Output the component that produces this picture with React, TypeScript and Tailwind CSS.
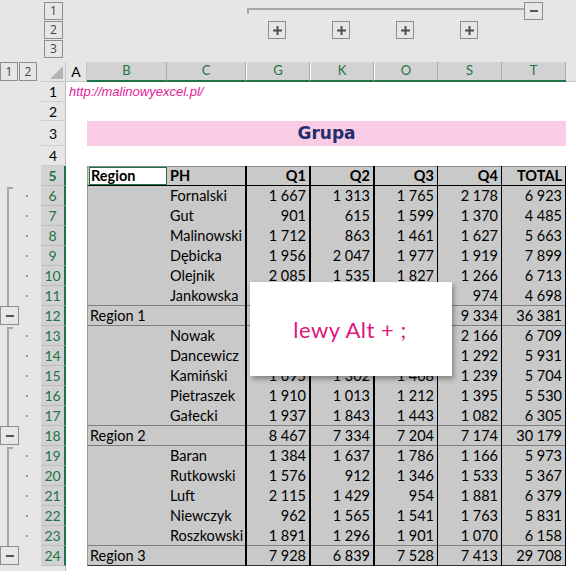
import React from 'react';

type DataRow = {
  n: number;
  kind: 'detail' | 'region';
  first?: boolean;
  last?: boolean;
  b: string;
  c: string;
  v: number[];
};

const rows: DataRow[] = [
  { n: 6, kind: 'detail', first: true, b: '', c: 'Fornalski', v: [1667, 1313, 1765, 2178, 6923] },
  { n: 7, kind: 'detail', b: '', c: 'Gut', v: [901, 615, 1599, 1370, 4485] },
  { n: 8, kind: 'detail', b: '', c: 'Malinowski', v: [1712, 863, 1461, 1627, 5663] },
  { n: 9, kind: 'detail', b: '', c: 'Dębicka', v: [1956, 2047, 1977, 1919, 7899] },
  { n: 10, kind: 'detail', b: '', c: 'Olejnik', v: [2085, 1535, 1827, 1266, 6713] },
  { n: 11, kind: 'detail', last: true, b: '', c: 'Jankowska', v: [1201, 1188, 1335, 974, 4698] },
  { n: 12, kind: 'region', b: 'Region 1', c: '', v: [9522, 7561, 9964, 9334, 36381] },
  { n: 13, kind: 'detail', first: true, b: '', c: 'Nowak', v: [1318, 1562, 1663, 2166, 6709] },
  { n: 14, kind: 'detail', b: '', c: 'Dancewicz', v: [1607, 1614, 1418, 1292, 5931] },
  { n: 15, kind: 'detail', b: '', c: 'Kamiński', v: [1695, 1302, 1468, 1239, 5704] },
  { n: 16, kind: 'detail', b: '', c: 'Pietraszek', v: [1910, 1013, 1212, 1395, 5530] },
  { n: 17, kind: 'detail', last: true, b: '', c: 'Gałecki', v: [1937, 1843, 1443, 1082, 6305] },
  { n: 18, kind: 'region', b: 'Region 2', c: '', v: [8467, 7334, 7204, 7174, 30179] },
  { n: 19, kind: 'detail', first: true, b: '', c: 'Baran', v: [1384, 1637, 1786, 1166, 5973] },
  { n: 20, kind: 'detail', b: '', c: 'Rutkowski', v: [1576, 912, 1346, 1533, 5367] },
  { n: 21, kind: 'detail', b: '', c: 'Luft', v: [2115, 1429, 954, 1881, 6379] },
  { n: 22, kind: 'detail', b: '', c: 'Niewczyk', v: [962, 1565, 1541, 1763, 5831] },
  { n: 23, kind: 'detail', last: true, b: '', c: 'Roszkowski', v: [1891, 1296, 1901, 1070, 6158] },
  { n: 24, kind: 'region', b: 'Region 3', c: '', v: [7928, 6839, 7528, 7413, 29708] },
];

const fmt = (n: number) =>
  n >= 1000 ? `${Math.floor(n / 1000)}\u00a0${String(n % 1000).padStart(3, '0')}` : String(n);

// widths of the value columns G K O S T and the black rules after each one
const valueCols = [
  { w: 'w-[62px]', sep: 'w-[2px]' },
  { w: 'w-[62px]', sep: 'w-[2px]' },
  { w: 'w-[62px]', sep: 'w-[1px]' },
  { w: 'w-[63px]', sep: 'w-[1px]' },
  { w: 'w-[63px]', sep: 'w-[1px]' },
];

const PlusIcon = () => (
  <svg width="9" height="9" viewBox="0 0 9 9">
    <rect x="0" y="3.5" width="9" height="2" fill="#505050" />
    <rect x="3.5" y="0" width="2" height="9" fill="#505050" />
  </svg>
);

const MinusIcon = () => <div className="h-[2px] w-[8px] bg-[#555]" />;

const OutlineBox: React.FC<{ className?: string; children?: React.ReactNode }> = ({ className = '', children }) => (
  <div
    className={`flex items-center justify-center border border-[#8e8e8e] bg-[#e6e6e6] text-[12px] leading-none text-[#444] font-['Open_Sans',sans-serif] ${className}`}
  >
    {children}
  </div>
);

const Strip: React.FC<{ row?: DataRow }> = ({ row }) => {
  if (!row) return <div className="w-[41px] shrink-0 bg-[#e6e6e6]" />;
  if (row.kind === 'region') {
    return (
      <div className="flex w-[41px] shrink-0 bg-[#e6e6e6]">
        <OutlineBox className="h-[19px] w-[19px]">
          <MinusIcon />
        </OutlineBox>
      </div>
    );
  }
  return (
    <div className="flex w-[41px] shrink-0 bg-[#e6e6e6]">
      <div className={`h-full w-[19px] pl-[7px] ${row.first ? 'pt-[1px]' : ''}`}>
        <div className={`h-full w-[6px] border-l-2 border-[#a6a6a6] ${row.first ? 'border-t-2' : ''}`} />
      </div>
      <div className="flex items-center pl-[7px]">
        <div className="h-[2px] w-[2px] bg-[#9a9a9a]" />
      </div>
    </div>
  );
};

const RowHead: React.FC<{ n: number; active?: boolean }> = ({ n, active }) => (
  <div
    className={`flex w-[25px] shrink-0 items-center justify-center border-b text-[14px] ${
      active
        ? 'border-r-2 border-b-[#bdbdbd] border-r-[#217346] bg-[#d2d2d2] text-[#217346]'
        : 'border-r border-b-[#cfcfcf] border-r-[#bdbdbd] bg-[#e6e6e6] text-black'
    }`}
  >
    {n}
  </div>
);

const SheetRow: React.FC<{ row: DataRow }> = ({ row }) => {
  const line =
    row.kind === 'region' && row.n === 24
      ? 'border-b border-[#333]'
      : row.kind === 'region' || row.last
        ? 'border-b border-[#7f7f7f]'
        : '';
  return (
    <div className="flex h-[20px] text-[14.5px] text-black">
      <Strip row={row} />
      <RowHead n={row.n} active />
      <div className="w-[21px] shrink-0 bg-white" />
      <div className={`flex w-[80px] shrink-0 items-center border-l border-l-[#9a9a9a] bg-[#c9c9c9] pl-[2px] whitespace-nowrap ${line}`}>
        {row.b}
      </div>
      <div className={`flex w-[78px] shrink-0 items-center bg-[#c9c9c9] pl-[3px] whitespace-nowrap ${line}`}>{row.c}</div>
      <div className="w-[2px] shrink-0 bg-black" />
      {valueCols.map((col, i) => (
        <React.Fragment key={i}>
          <div className={`flex ${col.w} shrink-0 items-center justify-end bg-[#c9c9c9] pr-[3px] ${line}`}>
            {fmt(row.v[i])}
          </div>
          <div className={`${col.sep} shrink-0 bg-black`} />
        </React.Fragment>
      ))}
      <div className="flex-1 bg-white" />
    </div>
  );
};

export default function App() {
  return (
    <div className="relative h-[571px] w-[576px] overflow-hidden bg-white font-['Lato',sans-serif]">
      {/* outline levels for columns */}
      <div className="flex h-[62px] bg-[#e6e6e6]">
        <div className="w-[44px] shrink-0" />
        <div className="flex flex-col gap-[1px] pt-[2px]">
          {['1', '2', '3'].map((l) => (
            <OutlineBox key={l} className="h-[18px] w-[19px]">
              {l}
            </OutlineBox>
          ))}
        </div>
        <div className="w-[184px] shrink-0" />
        <div className="flex flex-col">
          <div className="flex h-[21px] items-start">
            <div className="mt-[8px] h-[6px] w-[277px] border-l-2 border-t-2 border-[#a6a6a6]" />
            <OutlineBox className="mt-[2px] h-[18px] w-[19px]">
              <MinusIcon />
            </OutlineBox>
          </div>
          <div className="flex gap-[46px] pl-[21px]">
            {[0, 1, 2, 3].map((i) => (
              <OutlineBox key={i} className="h-[18px] w-[18px]">
                <PlusIcon />
              </OutlineBox>
            ))}
          </div>
        </div>
      </div>

      {/* column headers */}
      <div className="flex h-[20px] text-[13px]">
        <div className="flex w-[41px] shrink-0 gap-[1px] bg-[#e6e6e6]">
          <OutlineBox className="h-[19px] w-[18px]">1</OutlineBox>
          <OutlineBox className="h-[19px] w-[18px]">2</OutlineBox>
        </div>
        <div className="flex w-[25px] shrink-0 items-end justify-end border-b border-r border-[#c6c6c6] bg-[#e6e6e6] pb-[2px] pr-[2px]">
          <svg width="13" height="13" viewBox="0 0 13 13">
            <polygon points="13,0 13,13 0,13" fill="#b5b5b5" />
          </svg>
        </div>
        <div className="flex w-[21px] shrink-0 items-center justify-center border-b border-r border-[#c6c6c6] bg-[#e6e6e6] text-[14px] text-black">
          A
        </div>
        <div className="flex w-[80px] shrink-0 items-center justify-center border-b-2 border-r border-b-[#217346] border-r-[#ababab] bg-[#d2d2d2] text-[#217346]">
          B
        </div>
        <div className="flex w-[78px] shrink-0 items-center justify-center border-b-2 border-b-[#217346] bg-[#d2d2d2] text-[#217346]">
          C
        </div>
        <div className="w-[2px] shrink-0 border-b-2 border-l border-b-[#217346] border-l-[#ababab] bg-white" />
        {['G', 'K', 'O', 'S', 'T'].map((l, i) => (
          <React.Fragment key={l}>
            <div
              className={`flex ${valueCols[i].w} shrink-0 items-center justify-center border-b-2 border-b-[#217346] bg-[#d2d2d2] text-[#217346]`}
            >
              {l}
            </div>
            <div
              className={`${valueCols[i].sep} shrink-0 border-b-2 border-b-[#217346] ${
                i < 2 ? 'border-l border-l-[#ababab] bg-white' : 'bg-[#ababab]'
              }`}
            />
          </React.Fragment>
        ))}
        <div className="flex-1 border-b border-[#c6c6c6] bg-[#e6e6e6]" />
      </div>

      {/* row 1 */}
      <div className="flex h-[20px]">
        <Strip />
        <RowHead n={1} />
        <div className="flex flex-1 items-center pl-[3px] font-['Liberation_Sans',sans-serif] text-[13px] italic text-[#e3219b] whitespace-nowrap">
          http://malinowyexcel.pl/
        </div>
      </div>
      {/* row 2 */}
      <div className="flex h-[19px]">
        <Strip />
        <RowHead n={2} />
        <div className="flex-1 bg-white" />
      </div>
      {/* row 3 */}
      <div className="flex h-[25px]">
        <Strip />
        <RowHead n={3} />
        <div className="w-[21px] shrink-0 bg-white" />
        <div className="flex w-[479px] shrink-0 items-center justify-center bg-[#f9cbe4] font-['DejaVu_Sans',sans-serif] text-[17px] font-bold text-[#232d6c]">
          Grupa
        </div>
        <div className="flex-1 bg-white" />
      </div>
      {/* row 4 */}
      <div className="flex h-[20px]">
        <Strip />
        <RowHead n={4} />
        <div className="flex-1 bg-white" />
      </div>
      {/* row 5: table header */}
      <div className="flex h-[20px] text-[14.5px] font-bold text-black">
        <Strip />
        <RowHead n={5} active />
        <div className="w-[21px] shrink-0 bg-white" />
        <div className="flex w-[80px] shrink-0 border-b border-l border-t border-b-black border-l-[#9a9a9a] border-t-[#8a8a8a] bg-[#c9c9c9] pl-[1px]">
          <div className="flex h-[18px] w-[78px] items-center border border-[#217346] bg-white pl-[1px]">Region</div>
        </div>
        <div className="flex w-[78px] shrink-0 items-center border-b border-t border-b-black border-t-[#8a8a8a] bg-[#c9c9c9] pl-[3px]">
          PH
        </div>
        <div className="w-[2px] shrink-0 bg-black" />
        {['Q1', 'Q2', 'Q3', 'Q4', 'TOTAL'].map((h, i) => (
          <React.Fragment key={h}>
            <div
              className={`flex ${valueCols[i].w} shrink-0 items-center justify-end border-b border-t border-b-black border-t-[#8a8a8a] bg-[#c9c9c9] pr-[3px]`}
            >
              {h}
            </div>
            <div className={`${valueCols[i].sep} shrink-0 bg-black`} />
          </React.Fragment>
        ))}
        <div className="flex-1 bg-white" />
      </div>

      {rows.map((r) => (
        <SheetRow key={r.n} row={r} />
      ))}

      {/* row 25, cut off */}
      <div className="flex h-[5px]">
        <Strip />
        <div className="w-[25px] shrink-0 border-r border-[#bdbdbd] bg-[#e6e6e6]" />
        <div className="flex-1 bg-white" />
      </div>

      {/* shortcut note laid over the sheet */}
      <div className="absolute left-[250px] top-[282px] flex h-[94px] w-[202px] items-center justify-center bg-white shadow-[2px_3px_5px_rgba(0,0,0,0.35)]">
        <span className="pr-[2px] text-[22px] tracking-[0.5px] text-[#e0137f]">lewy Alt + ;</span>
      </div>
    </div>
  );
}
